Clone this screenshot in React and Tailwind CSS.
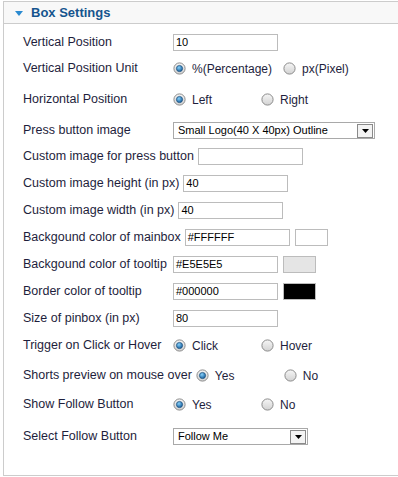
const labelCls = "text-[12px] leading-none text-[#1e1e3c]";

function Radio({ checked }) {
  return (
    <svg width="13" height="13" viewBox="0 0 13 13" className="shrink-0">
      <defs>
        <linearGradient id="rb-off" x1="0" y1="0" x2="0" y2="1">
          <stop offset="0" stopColor="#f6f6f6" />
          <stop offset="1" stopColor="#d2d2d2" />
        </linearGradient>
        <radialGradient id="rb-on" cx="0.4" cy="0.35" r="0.7">
          <stop offset="0" stopColor="#86d0fa" />
          <stop offset="1" stopColor="#0f5796" />
        </radialGradient>
      </defs>
      <circle cx="6.5" cy="6.5" r="5.6" fill="url(#rb-off)" stroke="#8b8b8b" />
      {checked && (
        <circle cx="6.5" cy="6.5" r="3.1" fill="url(#rb-on)" stroke="#1b4d7a" strokeWidth="0.7" />
      )}
    </svg>
  );
}

function Radios({ options }) {
  return (
    <div className="flex items-center">
      {options.map((o) => (
        <label key={o.label} className="flex min-w-[88px] items-center gap-[6px] pr-[11px]">
          <Radio checked={o.checked} />
          <span className={labelCls}>{o.label}</span>
        </label>
      ))}
    </div>
  );
}

function TextInput({ value = "" }) {
  return (
    <div className="flex h-[17px] w-[105px] items-center border border-[#bcbcbc] bg-white pl-[2px] text-[11px] text-black">
      {value}
    </div>
  );
}

function Swatch({ color }) {
  return <div className={`ml-[5px] h-[17px] w-[33px] border border-[#bcbcbc] ${color}`} />;
}

function Select({ value, width }) {
  return (
    <div className={`flex h-[17px] items-center justify-between border border-[#a9a9a9] bg-white pl-[4px] pr-[1px] text-[11px] text-black ${width}`}>
      <span>{value}</span>
      <span className="flex h-[14px] w-[16px] items-center justify-center border border-[#8a8a8a] bg-[#f3f3f3]">
        <svg width="7" height="4" viewBox="0 0 7 4">
          <path d="M0 0h7L3.5 4z" fill="#000" />
        </svg>
      </span>
    </div>
  );
}

const rows = [
  { label: "Vertical Position", mt: "mt-[10px]", field: <TextInput value="10" /> },
  {
    label: "Vertical Position Unit",
    mt: "mt-[9px]",
    field: <Radios options={[{ label: "%(Percentage)", checked: true }, { label: "px(Pixel)" }]} />,
  },
  {
    label: "Horizontal Position",
    mt: "mt-[14px]",
    field: <Radios options={[{ label: "Left", checked: true }, { label: "Right" }]} />,
  },
  {
    label: "Press button image",
    mt: "mt-[14px]",
    field: <Select value="Small Logo(40 X 40px) Outline" width="w-[202px]" />,
  },
  { label: "Custom image for press button", mt: "mt-[9px]", field: <TextInput /> },
  { label: "Custom image height (in px)", mt: "mt-[10px]", field: <TextInput value="40" /> },
  { label: "Custom image width (in px)", mt: "mt-[10px]", field: <TextInput value="40" /> },
  {
    label: "Backgound color of mainbox",
    mt: "mt-[10px]",
    field: (
      <div className="flex items-center">
        <TextInput value="#FFFFFF" />
        <Swatch color="bg-white" />
      </div>
    ),
  },
  {
    label: "Backgound color of tooltip",
    mt: "mt-[10px]",
    field: (
      <div className="flex items-center">
        <TextInput value="#E5E5E5" />
        <Swatch color="bg-[#e5e5e5]" />
      </div>
    ),
  },
  {
    label: "Border color of tooltip",
    mt: "mt-[10px]",
    field: (
      <div className="flex items-center">
        <TextInput value="#000000" />
        <Swatch color="bg-black" />
      </div>
    ),
  },
  { label: "Size of pinbox (in px)", mt: "mt-[10px]", field: <TextInput value="80" /> },
  {
    label: "Trigger on Click or Hover",
    mt: "mt-[10px]",
    field: <Radios options={[{ label: "Click", checked: true }, { label: "Hover" }]} />,
  },
  {
    label: "Shorts preview on mouse over",
    mt: "mt-[13px]",
    field: <Radios options={[{ label: "Yes", checked: true }, { label: "No" }]} />,
  },
  {
    label: "Show Follow Button",
    mt: "mt-[12px]",
    field: <Radios options={[{ label: "Yes", checked: true }, { label: "No" }]} />,
  },
  {
    label: "Select Follow Button",
    mt: "mt-[15px]",
    field: <Select value="Follow Me" width="w-[135px]" />,
  },
];

export default function App() {
  return (
    <div className="h-[477px] w-[398px] bg-white pl-[3px] pt-[1px] font-[family-name:'Liberation_Sans',Arial,sans-serif]">
      <div className="h-[475px] border-b border-l border-t border-[#cccccc] bg-white">
        <div className="flex h-[22px] items-center border-b border-[#cccccc] bg-[#f8f8f8] pl-[11px]">
          <svg width="8" height="5" viewBox="0 0 8 5" className="mt-[1px]">
            <path d="M0 0h8L4 5z" fill="#2a8ad0" />
          </svg>
          <span className="ml-[8px] text-[13px] font-bold text-[#15548e]">Box Settings</span>
        </div>
        <div className="flex flex-col pl-[19px]">
          {rows.map((r) => (
            <div key={r.label} className={`flex h-[17px] items-center ${r.mt}`}>
              <span className="min-w-[150px] whitespace-nowrap pr-[4px] text-[12.5px] leading-none text-[#1e1e3c]">
                {r.label}
              </span>
              {r.field}
            </div>
          ))}
        </div>
      </div>
    </div>
  );
}
